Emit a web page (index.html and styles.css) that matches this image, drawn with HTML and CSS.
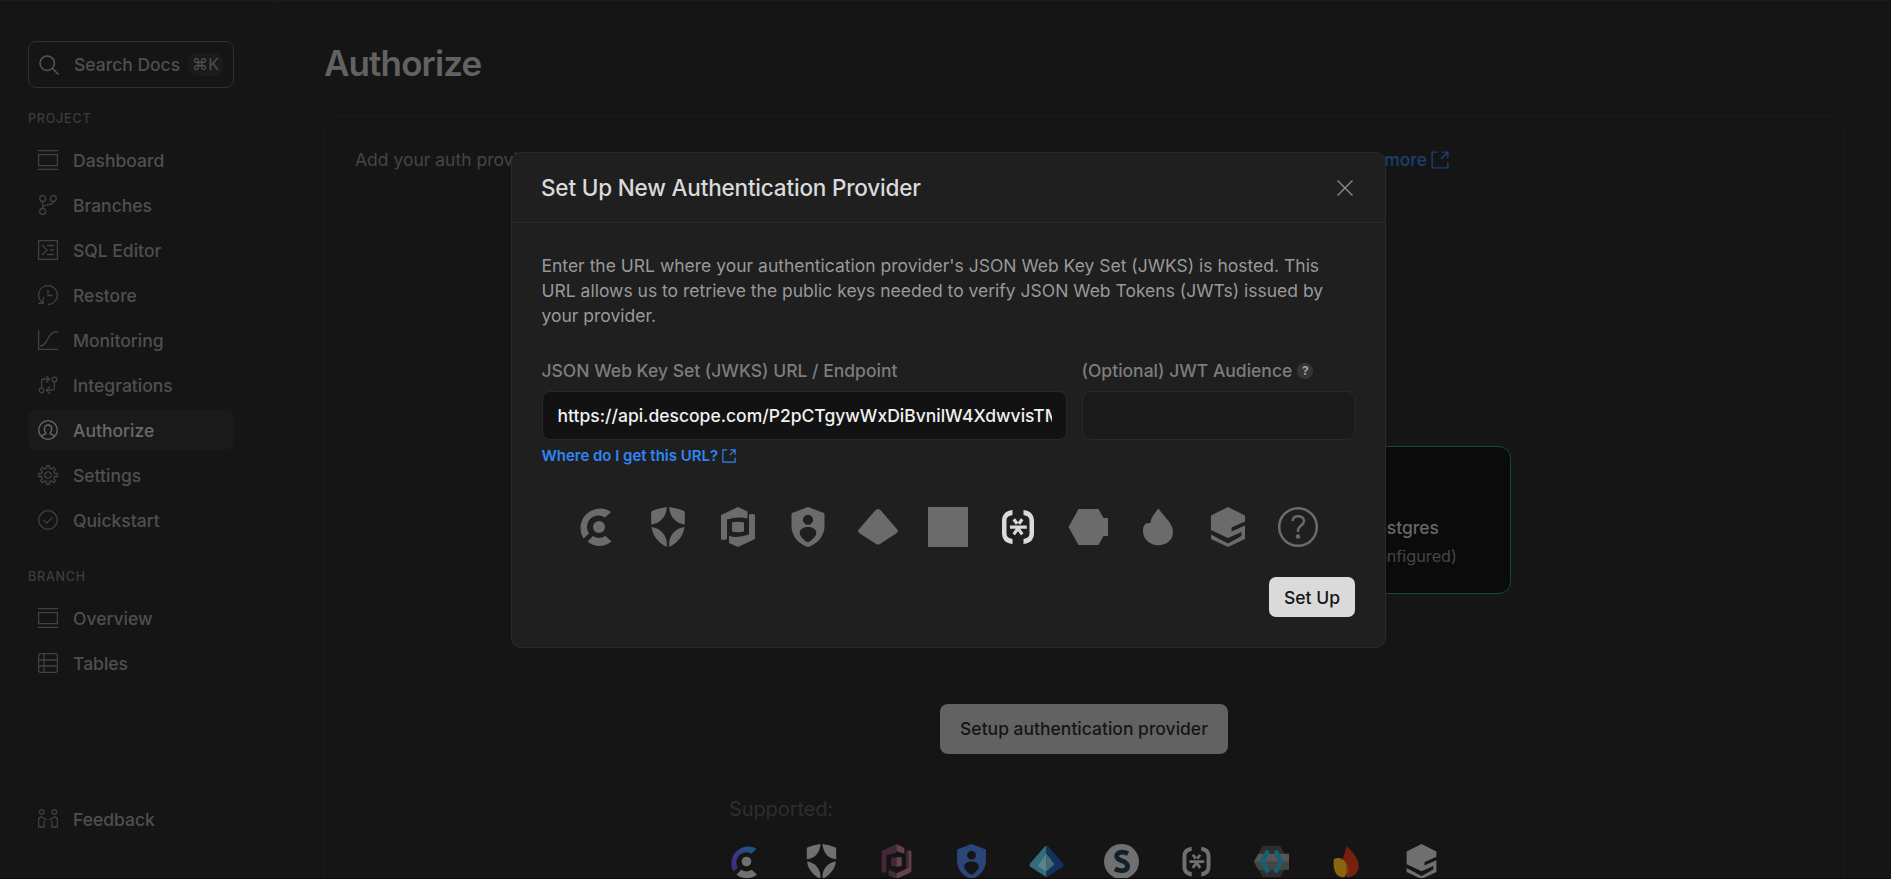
FILE: index.html
```html
<!DOCTYPE html>
<html lang="en">
<head>
<meta charset="utf-8">
<title>Authorize</title>
<link rel="stylesheet" href="styles.css">
</head>
<body>
<svg class="defs" width="0" height="0">
  <symbol id="i-dash" viewBox="0 0 20 20"><path d="M0 .6h20M0 19.4h20M.6 4.6h18.8v11H.6z"/></symbol>
  <symbol id="i-ext" viewBox="0 0 16 16"><path d="M6 1H1v14h14v-5M9.5 1H15v5.500M15 1L9 7"/></symbol>
  <symbol id="i-stytch" viewBox="0 0 40 40"><path d="M20 0l17 8.500v6L23.500 20.500v4L37 18.500v13.500L20 40 3 32v-4.500l17 9L33.500 29v-4L20 31 3 23V8.500z"/></symbol>
  <symbol id="i-auth0" viewBox="0 0 40 40"><path d="M18.800 0v1C18 9.500 12.500 16.500 3.200 17.500V5.500Q3.200 4.300 4.400 3.800 11 1 18.800 0zM21.200 0v1C22 9.500 27.500 16.500 36.800 17.500V5.500Q36.800 4.300 35.600 3.800 29 1 21.200 0zM3.500 20C12 21 18 27.500 18.800 35.500V40C10 35.500 4.500 28.500 3.500 20zM36.500 20C28 21 22 27.500 21.200 35.500V40C30 35.500 35.500 28.500 36.500 20z"/></symbol>
  <symbol id="i-descope" viewBox="0 0 40 40"><path d="M14.500 3v5C9.500 9 8.500 11 8.500 14v12c0 3 1 5 6 6v5C7 36 4 32 4 26V14C4 8 7 4 14.500 3zM25.500 3v5c5 1 6 3 6 6v12c0 3-1 5-6 6v5C33 36 36 32 36 26V14C36 8 33 4 25.500 3z"/><path d="M12 20.200h16.800M15.800 12.300l3.300 4.500M24.200 12.300l-3.300 4.500M15.800 27.300l4.200-6 4.200 6" fill="none" stroke="currentColor" stroke-width="3.200"/></symbol>
  <symbol id="i-gcp" viewBox="0 0 40 40"><path fill-rule="evenodd" d="M20 0l16.500 6.200V19C36.500 29 29.500 37 20 40 10.500 37 3.500 29 3.500 19V6.200zM20 7.800a5 5 0 1 0 .01 0zM20 20c-4 0-8.300 2-8.300 5.500 0 4 4 7.500 8.300 10 4.300-2.500 8.300-6 8.300-10C28.300 22 24 20 20 20z"/></symbol>
</svg>

<div class="app">
  <aside class="sidebar">
    <div class="search">
      <svg class="search-icon" viewBox="0 0 20 20"><circle cx="8.200" cy="8.200" r="7.200"/><path d="M13.500 13.500l6 6"/></svg>
      <span>Search Docs</span><kbd>⌘K</kbd>
    </div>
    <h2 class="group">PROJECT</h2>
    <nav class="nav">
      <a class="item"><svg class="icon"><use href="#i-dash"/></svg>Dashboard</a>
      <a class="item"><svg class="icon" viewBox="0 0 20 20"><circle cx="4.700" cy="3.500" r="3"/><circle cx="15.300" cy="3.500" r="3"/><circle cx="4.700" cy="16.500" r="3"/><path d="M4.700 6.500v7M15.300 6.500c0 5-10 2-10.600 6"/></svg>Branches</a>
      <a class="item"><svg class="icon" viewBox="0 0 20 20"><path d="M.6.600h18.800v18.800H.6zM4 5l5 5-5 5M9 5.500h7M12 10h4M9 14.500h7"/></svg>SQL Editor</a>
      <a class="item"><svg class="icon" viewBox="0 0 20 20"><path d="M10 19.400A9.400 9.400 0 1 0 2.500 15.700L4.600 18M5.200 12v6.400H0M10 5v5.500h4.500"/></svg>Restore</a>
      <a class="item"><svg class="icon" viewBox="0 0 20 20"><path d="M.6 0v19.400H20M2 16c9 0 6-14.500 18-14.500"/></svg>Monitoring</a>
      <a class="item"><svg class="icon" viewBox="0 0 20 20"><circle cx="3.600" cy="15.500" r="2.300"/><circle cx="16.400" cy="4.500" r="2.300"/><path d="M3.600 13V6q0-2 2-2h6M8 .800L11.500 4 8 7.500M16.400 7v6q0 2-2 2h-6M12 11.500L8.500 15.200 12 19"/></svg>Integrations</a>
      <a class="item active"><svg class="icon" viewBox="0 0 20 20"><circle cx="10" cy="10" r="9.300"/><path d="M3.500 16.500c1-2 3-2.300 4.500-2.800 0-1-1.600-2-1.600-4.700 0-2.500 1.500-4 3.600-4s3.600 1.500 3.600 4c0 2.700-1.600 3.700-1.600 4.700 1.500.5 3.500.8 4.500 2.800"/></svg>Authorize</a>
      <a class="item"><svg class="icon" viewBox="0 0 20 20"><circle cx="10" cy="10" r="3.200"/><path d="M8.500.700h3v2.600l2 .9 1.900-1.900 2.200 2.200-1.900 1.900.9 2.100h2.700v3h-2.700l-.9 2.100 1.900 1.900-2.200 2.200-1.900-1.900-2 .9v2.600h-3v-2.600l-2-.9-1.900 1.900-2.200-2.200 1.900-1.900-.9-2.100H.7v-3h2.700l.9-2.100-1.900-1.900 2.200-2.200 1.900 1.900 2-.9z"/></svg>Settings</a>
      <a class="item"><svg class="icon" viewBox="0 0 20 20"><circle cx="10" cy="10" r="9.300"/><path d="M5.500 10l3.200 3.200 5.800-5.800"/></svg>Quickstart</a>
    </nav>
    <h2 class="group second">BRANCH</h2>
    <nav class="nav">
      <a class="item"><svg class="icon"><use href="#i-dash"/></svg>Overview</a>
      <a class="item"><svg class="icon" viewBox="0 0 20 20"><rect x=".6" y=".6" width="18.800" height="18.800" rx="2"/><path d="M6 .600v18.800M.6 7h18.800M.6 13h18.800"/></svg>Tables</a>
    </nav>
    <a class="item feedback"><svg class="icon" viewBox="0 0 20 20"><circle cx="3.700" cy="3" r="2.300"/><circle cx="16.300" cy="3" r="2.300"/><path d="M6 12v6H.6V11q0-3 2.900-3c2 0 3 2.500 5.300 3M14 12v6h5.400V11q0-3-2.900-3c-2 0-3 2.500-5.300 3"/></svg>Feedback</a>
  </aside>

  <main class="main">
    <h1 class="title">Authorize</h1>
    <section class="panel">
      <p class="intro"><span>Add your auth provider to manage access to your data with Row-Level Security and JSON Web Tokens.</span><a class="more">Learn more<svg><use href="#i-ext"/></svg></a></p>
      <div class="diagram"><div class="pg"><b>Postgres</b><span>(RLS configured)</span></div></div>
      <button class="setup-main">Setup authentication provider</button>
      <div class="supported">
        <p>Supported:</p>
        <div class="logos">
          <svg viewBox="0 0 40 40"><defs><linearGradient id="g-clerk" x1="1" y1="0" x2="0" y2="1"><stop offset="0" stop-color="#165d7b"/><stop offset=".45" stop-color="#35408a"/><stop offset="1" stop-color="#41267f"/></linearGradient></defs><path fill="url(#g-clerk)" d="M31.500 5.500L25.500 11A11.500 11.500 0 0 0 10 27L5 31.500A19.300 19.300 0 0 1 31.500 5.500z"/><circle cx="20" cy="20" r="5.500"/><path d="M8.500 35l5.500-5.500q6 4 12 0l6 5.500q-11.500 8.500-23.500 0z"/></svg>
          <svg><use href="#i-auth0"/></svg>
          <svg viewBox="0 0 40 40"><path fill="#452835" d="M20 0L3 8v24l5.500 1V12.500L20 10zM11 29v7l9 4v-6.500zM31 7l3 .5V27l-3 2zM14 15.500h6V25.500l-6-.5z"/><path fill="#65404f" d="M20 0l9 4.500V11L20 8zM34 7.500l3 .5v24l-17 8v-6.500l14-6.500zM20 15h6v10l-6 1z"/></svg>
          <svg><use href="#i-gcp" class="gcp"/></svg>
          <svg viewBox="0 0 40 40"><path fill="#326b7d" d="M20 2Q18.500 2 17.500 3.500L1 22.500Q-.5 24.500 1.500 26L20 38z"/><path fill="#14335a" d="M20 2Q21.500 2 22.500 3.500L39 22.500Q40.500 24.500 38.500 26L20 38z"/><path fill="#5c8389" d="M20 11v20.500L10 25z"/><path fill="#456a78" d="M20 11l9 12-9 8z"/></svg>
          <svg viewBox="0 0 40 40"><circle cx="20" cy="20" r="20"/><path d="M27.500 11c-6-3-13-2-13 3 0 6 12.500 4.500 12.500 11.500 0 6-9 6-14.500 3" fill="none" stroke="#13202a" stroke-width="5.500"/></svg>
          <svg><use href="#i-descope"/></svg>
          <svg viewBox="0 0 40 40"><path fill="#2e2e2e" d="M10 2h20l10 18-10 18H10L0 20z"/><path fill="#555" d="M5 11h35v18H5L0 20z"/><path fill="#444" d="M0 20h40v9H5z"/><path fill="none" stroke="#165f73" stroke-width="5" d="M16 7.500L9.500 20 16 32.500M24.500 7.500L31 20l-6.500 12.500"/></svg>
          <svg viewBox="0 0 40 40"><path fill="#76200e" d="M20.500 2C25 8 34 15 34 25c0 8-6 13-13.500 13l-5-20z"/><path fill="#8a6410" d="M5.500 17c5-2 12-1 14 6s0 12-2 15C10 38 4 33 5.500 17z"/><path fill="#8a3d0e" d="M13 16c6 1 10 13 5 22 6-4 6-18-5-22z"/></svg>
          <svg><use href="#i-stytch"/></svg>
        </div>
      </div>
    </section>
  </main>
</div>

<div class="modal" role="dialog">
  <header class="modal-head"><h3>Set Up New Authentication Provider</h3>
    <svg class="close" viewBox="0 0 16 16"><path d="M.5.500l15 15M15.500.500l-15 15"/></svg></header>
  <div class="modal-body">
    <p class="desc">Enter the URL where your authentication provider's JSON Web Key Set (JWKS) is hosted. This URL allows us to retrieve the public keys needed to verify JSON Web Tokens (JWTs) issued by your provider.</p>
    <div class="fields">
      <div class="field wide"><label>JSON Web Key Set (JWKS) URL / Endpoint</label>
        <div class="input filled"><span>https://api.descope.com/P2pCTgywWxDiBvnilW4XdwvisTM</span></div>
        <a class="where">Where do I get this URL?<svg><use href="#i-ext"/></svg></a></div>
      <div class="field"><label>(Optional) JWT Audience<i class="help">?</i></label><div class="input"></div></div>
    </div>
    <div class="providers">
      <svg viewBox="0 0 40 40"><path d="M33 5L27 10.500A11.500 11.500 0 0 0 11 26.500L5.500 31.500A19.500 19.500 0 0 1 33 5z"/><circle cx="21" cy="20" r="6"/><path d="M9.500 34.500l5.500-5.500q6 4 12.500 0l6 5.500q-12 9-24 0z"/></svg>
      <svg><use href="#i-auth0"/></svg>
      <svg viewBox="0 0 40 40"><path d="M20 0l9.500 4.500v7Q20 9 9 12.500V32q-3 1.500-6 .5V8z"/><path d="M31 7.500q3-1 6 0V32l-17 8-9-4v-7q9 2.500 20-1.500zM14 15.500q6-1.500 12 0v9q-6 1.500-12 0z"/></svg>
      <svg><use href="#i-gcp"/></svg>
      <svg viewBox="0 0 40 40"><path d="M20 2q1.500 0 2.800 1.500L39.300 22.500q1.500 2-.5 3.500L22 37q-2 1.200-4 0L1.200 26q-2-1.500-.5-3.500L17.200 3.500Q18.500 2 20 2z"/></svg>
      <svg viewBox="0 0 40 40"><path d="M0 0h40v40H0z"/></svg>
      <svg class="on"><use href="#i-descope"/></svg>
      <svg viewBox="0 0 40 40"><path d="M10.500 2h20l5 9H40v18h-4.500l-5 9h-20L.5 20z"/></svg>
      <svg viewBox="0 0 40 40"><path d="M20.500 1.500C25 9 35 15.500 35 25c0 8-6.500 13.200-15 13.200S5 32 5 24c0-5 1.500-8.500 7.500-8 .5-6 4-9.500 8-14.500z"/></svg>
      <svg><use href="#i-stytch"/></svg>
      <svg viewBox="0 0 40 40" class="q"><circle cx="20" cy="20" r="18.800"/><path d="M14.500 14c0-6.500 11.500-6.500 11.500 0 0 4.500-6 4.500-6 9.500v1.500" /><circle cx="20" cy="29.500" r="1" /></svg>
    </div>
    <div class="actions"><button class="setup">Set Up</button></div>
  </div>
</div>
</body>
</html>
```
FILE: styles.css
```css
* { box-sizing: border-box; }
html, body { margin: 0; height: 879px; overflow: hidden; }
body { background: #151515; font-family: Inter, sans-serif; font-size: 17.5px; border-top: 1px solid #1b1b1b; border-bottom: 1px solid #0e090c; }
h1, h2, h3, p { margin: 0; font-weight: 500; }
button { font: inherit; border: 0; }
.defs { position: absolute; }
.app { display: flex; height: 877px; overflow: hidden; }

.sidebar { width: 275px; padding: 40px 40px 0 28px; border-right: 1px solid #1a1a1a; display: flex; flex-direction: column; flex: none; color: #4f4f4f; }
.search { height: 47px; border: 1px solid #303030; border-radius: 8px; display: flex; align-items: center; padding: 0 10px; font-weight: 500; flex: none; }
.search-icon { width: 20px; height: 20px; margin-right: 15px; fill: none; stroke: #575757; stroke-width: 1.5; }
.search kbd { margin-left: auto; font: 16px Inter, "DejaVu Sans", sans-serif; background: #1b1b1b; border-radius: 8px; width: 35px; height: 23px; line-height: 22px; text-align: center; white-space: nowrap; }
.group { font-size: 12.500px; letter-spacing: .8px; line-height: 16px; color: #3d3d3d; margin: 23px 0 13px; font-weight: 500; }
.group.second { margin: 29px 0 13px; }
.nav { display: flex; flex-direction: column; gap: 5px; }
.item { display: flex; align-items: center; height: 40px; border-radius: 8px; padding-left: 10px; gap: 15px; font-weight: 500; flex: none; }
.icon { width: 20px; height: 20px; fill: none; stroke: #414141; stroke-width: 1.3; }
.active { background: #1a1a1a; color: #696969; }
.active .icon { stroke: #696969; }
.feedback { margin-top: 116px; }

.main { flex: 1; padding: 41px 47px 0 49px; }
.title { font-size: 35px; line-height: 42px; letter-spacing: -.9px; font-weight: 600; color: #626262; }
.panel { margin-top: 32px; height: 800px; border: 1px solid #1b1b1b; border-radius: 10px; padding: 30px; display: flex; flex-direction: column; align-items: center; }
.intro { width: 1094px; align-self: flex-start; display: flex; justify-content: space-between; line-height: 25px; font-weight: 400; color: #454545; white-space: nowrap; }
.more { display: flex; align-items: center; gap: 4px; font-weight: 500; color: #1b3f70; }
.more svg { width: 18px; height: 18px; fill: none; stroke: currentColor; stroke-width: 1.3; }
.diagram { width: 854px; margin-top: 274px; display: flex; justify-content: flex-end; }
.pg { width: 206px; height: 148px; border: 1.5px solid #0b4b40; border-radius: 12px; background: #0b0b0b; display: flex; flex-direction: column; align-items: flex-end; padding: 68px 53px 0 0; line-height: 25px; color: #464646; gap: 4px; white-space: nowrap; }
.pg b { font-weight: 500; margin-right: 18px; color: #676767; }
.pg span { font-size: 16.250px; }
.setup-main { margin-top: 110px; width: 288px; height: 50px; border-radius: 8px; background: #626262; color: #151515; font-weight: 500; padding: 0 0 2px; }
.supported { width: 710px; margin-top: 42px; color: #2e2e2e; font-size: 20px; }
.supported p { line-height: 26px; font-weight: 400; letter-spacing: -.1px; }
.logos { display: flex; gap: 40px; margin-top: 22px; fill: #707070; color: #707070; }
.logos svg { width: 35px; height: 35px; }
.logos .gcp { fill: #2a4578; }

.modal { position: absolute; left: 511px; top: 152px; width: 875px; height: 496px; background: #1f1f1f; border: 1px solid #2a2a2a; border-radius: 10px; }
.modal-head { height: 70px; border-bottom: 1px solid #2a2a2a; padding: 0 32px 0 29px; display: flex; align-items: center; justify-content: space-between; }
.modal-head h3 { font-size: 22.500px; letter-spacing: -.18px; color: #dadada; }
.close { width: 16px; height: 16px; fill: none; stroke: #8f8f8f; stroke-width: 1.3; }
.modal-body { padding: 30px 30px 0 29.500px; }
.desc { font-weight: 400; line-height: 25px; color: #999; height: 75px; }
.fields { display: grid; grid-template-columns: 525px 273px; gap: 15px; margin-top: 30px; }
.field label { display: flex; align-items: center; gap: 5px; line-height: 25px; font-weight: 500; color: #7d7d7d; }
.help { font: 700 12px Inter, sans-serif; background: #353535; color: #a0a0a0; width: 16px; height: 16px; line-height: 16px; border-radius: 50%; text-align: center; }
.input { height: 49px; margin-top: 8px; border: 1px solid #292929; border-radius: 8px; background: #1a1a1a; padding: 0 14px 0 15px; display: flex; align-items: center; font-weight: 500; color: #f1f1f1; }
.input span { overflow: hidden; white-space: nowrap; flex: 1; line-height: 25px; }
.filled { background: #121212; }
.where { display: flex; align-items: center; gap: 4px; margin-top: 6px; font-size: 15px; line-height: 20px; font-weight: 600; color: #2e86f6; letter-spacing: -.02px; }
.where svg { width: 14px; height: 14px; fill: none; stroke: currentColor; stroke-width: 1.3; }
.providers { display: flex; justify-content: center; gap: 30px; margin: 41px 1.500px 0 0; fill: #6b6b6b; color: #6b6b6b; }
.providers svg { width: 40px; height: 40px; flex: none; }
.providers .on { fill: #dadada; color: #dadada; }
.providers .q { fill: none; stroke: #6b6b6b; stroke-width: 2.500; }
.actions { display: flex; justify-content: flex-end; margin-top: 30px; }
.setup { width: 86px; height: 40px; border-radius: 7px; background: #dadada; color: #151515; font-weight: 500; padding: 0; }
```
